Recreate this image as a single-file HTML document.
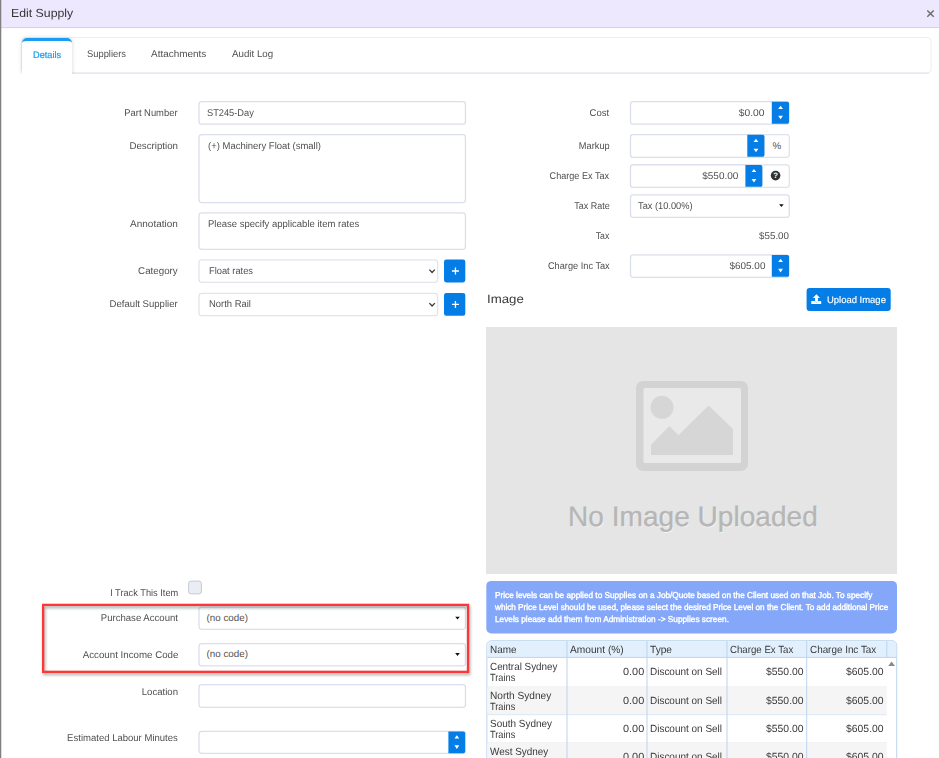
<!DOCTYPE html>
<html><head><meta charset="utf-8"><title>Edit Supply</title>
<style>
*{box-sizing:border-box;margin:0;padding:0}
html,body{width:939px;height:758px;overflow:hidden;background:#fff}
body{position:relative;font-family:"Liberation Sans","DejaVu Sans",sans-serif;font-size:9.8px;color:#505050;line-height:1;text-rendering:geometricPrecision}
.a{position:absolute}
.tl{position:absolute;white-space:nowrap;transform-origin:0 50%}
.tr{position:absolute;white-space:nowrap;transform-origin:100% 50%;text-align:right}
svg{position:absolute;overflow:visible}
#g{left:0;top:0}
</style></head><body>
<svg id="g" width="939" height="758" viewBox="0 0 939 758">
<rect x="0" y="0" width="939" height="27.2" fill="#ede8fd"/>
<rect x="0" y="27.1" width="939" height="1" fill="#d7cafa"/>
<rect x="0" y="0" width="1" height="758" fill="#808080"/>
<rect x="1" y="0" width="0.6" height="758" fill="#808080" opacity=".45"/>
<path d="M927.3 10.4l6.4 6.4M933.7 10.4l-6.4 6.4" stroke="#6c6c6c" stroke-width="1.45" fill="none"/>
<rect x="21.5" y="37.5" width="909.6" height="35.6" rx="4" fill="#fff" stroke="#eceef2" stroke-width="1"/>
<rect x="24" y="72.6" width="905" height="1" fill="#dde2e9"/>
<rect x="199.00" y="101.65" width="266.45" height="22.55" rx="2.8" fill="#fff" stroke="#dbdeec" stroke-width="1.25"/>
<rect x="199.00" y="134.60" width="266.45" height="68.00" rx="2.8" fill="#fff" stroke="#dbdeec" stroke-width="1.25"/>
<rect x="199.00" y="212.80" width="266.45" height="36.60" rx="2.8" fill="#fff" stroke="#dbdeec" stroke-width="1.25"/>
<rect x="199.00" y="259.90" width="238.60" height="22.40" rx="2.8" fill="#fff" stroke="#e2e4ee" stroke-width="1.25"/>
<path d="M429.40 269.60l2.7 2.9l2.7 -2.9" stroke="#3a3a3a" stroke-width="1.3" fill="none"/>
<rect x="444.00" y="259.40" width="21.30" height="23.00" rx="2.3" fill="#047de6"/>
<path d="M455.45 267.50v7M451.95 271.00h7" stroke="#fff" stroke-width="1.3" fill="none"/>
<rect x="199.00" y="293.40" width="238.60" height="22.30" rx="2.8" fill="#fff" stroke="#e2e4ee" stroke-width="1.25"/>
<path d="M429.40 303.10l2.7 2.9l2.7 -2.9" stroke="#3a3a3a" stroke-width="1.3" fill="none"/>
<rect x="444.00" y="292.90" width="21.30" height="22.90" rx="2.3" fill="#047de6"/>
<path d="M455.45 300.95v7M451.95 304.45h7" stroke="#fff" stroke-width="1.3" fill="none"/>
<rect x="188.60" y="581.10" width="12.80" height="12.80" rx="2.6" fill="#eaedf3" stroke="#c3cad6" stroke-width="1.0"/>
<rect x="199.00" y="607.00" width="266.45" height="22.30" rx="2.8" fill="#fff" stroke="#dbdeec" stroke-width="1.25"/>
<path d="M455.20 616.70h4.6l-2.3 2.9Z" fill="#111"/>
<rect x="199.00" y="643.70" width="266.45" height="22.20" rx="2.8" fill="#fff" stroke="#dbdeec" stroke-width="1.25"/>
<path d="M455.20 653.10h4.6l-2.3 2.9Z" fill="#111"/>
<rect x="199.00" y="684.60" width="266.45" height="22.80" rx="2.8" fill="#fff" stroke="#dbdeec" stroke-width="1.25"/>
<rect x="199.00" y="731.30" width="266.45" height="22.10" rx="2.8" fill="#fff" stroke="#dbdeec" stroke-width="1.25"/>
<path d="M448.40 731.40H463.40A1.7 1.7 0 0 1 465.10 733.10V751.55A1.7 1.7 0 0 1 463.40 753.25H448.40Z" fill="#047de6"/>
<path d="M454.45 738.53l2.4 -3.2l2.4 3.2Z M454.45 745.28l2.4 3.7l2.4 -3.7Z" fill="#fff"/>
<rect x="630.50" y="101.65" width="158.20" height="22.55" rx="2.8" fill="#fff" stroke="#dbdeec" stroke-width="1.25"/>
<path d="M771.80 101.75H787.40A1.7 1.7 0 0 1 789.10 103.45V121.95A1.7 1.7 0 0 1 787.40 123.65H771.80Z" fill="#047de6"/>
<path d="M778.15 108.90l2.4 -3.2l2.4 3.2Z M778.15 115.65l2.4 3.7l2.4 -3.7Z" fill="#fff"/>
<rect x="630.50" y="134.60" width="158.80" height="22.70" rx="2.8" fill="#fff" stroke="#dfe2ec" stroke-width="1.25"/>
<rect x="630.50" y="134.60" width="133.50" height="22.70" rx="2.8" fill="#fff" stroke="#dbdeec" stroke-width="1.25"/>
<path d="M747.30 134.70H762.70A1.7 1.7 0 0 1 764.40 136.40V155.05A1.7 1.7 0 0 1 762.70 156.75H747.30Z" fill="#047de6"/>
<path d="M753.55 141.92l2.4 -3.2l2.4 3.2Z M753.55 148.67l2.4 3.7l2.4 -3.7Z" fill="#fff"/>
<rect x="630.50" y="164.90" width="158.80" height="22.50" rx="2.8" fill="#fff" stroke="#dfe2ec" stroke-width="1.25"/>
<rect x="630.50" y="164.90" width="131.50" height="22.50" rx="2.8" fill="#fff" stroke="#dbdeec" stroke-width="1.25"/>
<path d="M745.40 165.00H760.60A1.7 1.7 0 0 1 762.30 166.70V185.15A1.7 1.7 0 0 1 760.60 186.85H745.40Z" fill="#047de6"/>
<path d="M751.55 172.12l2.4 -3.2l2.4 3.2Z M751.55 178.88l2.4 3.7l2.4 -3.7Z" fill="#fff"/>
<circle cx="775.6" cy="175.6" r="4.8" fill="#303030"/>
<rect x="630.50" y="194.80" width="158.80" height="22.50" rx="2.8" fill="#fff" stroke="#dbdeec" stroke-width="1.25"/>
<path d="M779.10 204.20h4.6l-2.3 2.9Z" fill="#111"/>
<rect x="630.50" y="254.80" width="158.20" height="22.60" rx="2.8" fill="#fff" stroke="#dbdeec" stroke-width="1.25"/>
<path d="M771.80 254.90H787.40A1.7 1.7 0 0 1 789.10 256.60V275.15A1.7 1.7 0 0 1 787.40 276.85H771.80Z" fill="#047de6"/>
<path d="M778.15 262.07l2.4 -3.2l2.4 3.2Z M778.15 268.82l2.4 3.7l2.4 -3.7Z" fill="#fff"/>
<rect x="806.6" y="287.9" width="84.1" height="23.1" rx="3" fill="#047de6"/>
<path d="M816.4 294.3L820 297.95H817.9V301.3H815V297.95H812.8Z M811.3 301.1H821.2V303.9H811.3Z" fill="#fff"/>
<path d="M814.3 301.7Q816.4 302.9 818.6 301.7" stroke="#047de6" stroke-width=".55" fill="none" opacity=".55"/>
<rect x="486" y="327" width="411" height="247" fill="#e5e5e5"/>
<rect x="636" y="381" width="112" height="90" rx="7" fill="#d3d3d3"/>
<rect x="643.5" y="388" width="97.5" height="75" rx="1.5" fill="#e9e9e9"/>
<circle cx="662" cy="407.3" r="11.5" fill="#d6d6d6"/>
<path d="M651 455V444.8L669.3 426.1L678.5 435.3L708.6 405.4L733 429V455Z" fill="#d6d6d6"/>
<text x="693.6" y="526.6" text-anchor="middle" font-family="Liberation Sans,sans-serif" font-size="28.1" fill="#f6f6f6">No Image Uploaded</text>
<text x="692.9" y="525.6" text-anchor="middle" font-family="Liberation Sans,sans-serif" font-size="28.1" fill="#b6b6b6" stroke="#b6b6b6" stroke-width=".35">No Image Uploaded</text>
<rect x="486.3" y="580.9" width="410.7" height="52.6" rx="5" fill="#84a7f9"/>
<path d="M486.9 764V645.2A4.5 4.5 0 0 1 491.4 640.7H892.2A4.5 4.5 0 0 1 896.7 645.2V764Z" fill="#fff" stroke="#bcd4ef" stroke-width="1"/>
<path d="M487.4 657V645.2A4 4 0 0 1 491.4 641.2H892.2A4 4 0 0 1 896.2 645.2V657Z" fill="#e2effd"/>
<rect x="487.4" y="656.9" width="408.8" height="1" fill="#bcd4ef"/>
<rect x="487.4" y="686.0" width="399.4" height="1" fill="#dae6f4"/>
<rect x="487.4" y="686.0" width="399.4" height="28.2" fill="#f5f5f5"/>
<rect x="487.4" y="714.2" width="399.4" height="1" fill="#dae6f4"/>
<rect x="487.4" y="742.2" width="399.4" height="1" fill="#dae6f4"/>
<rect x="487.4" y="742.2" width="399.4" height="27.8" fill="#f5f5f5"/>
<rect x="487.4" y="770.0" width="399.4" height="1" fill="#dae6f4"/>
<rect x="566.5" y="641" width="1" height="118" fill="#bcd4ef"/>
<rect x="646.5" y="641" width="1" height="118" fill="#bcd4ef"/>
<rect x="726.5" y="641" width="1" height="118" fill="#bcd4ef"/>
<rect x="806.2" y="641" width="1" height="118" fill="#bcd4ef"/>
<rect x="886.3" y="641" width="1" height="16.5" fill="#bcd4ef"/>
<path d="M888.2 666l3.4 -4.6l3.4 4.6Z" fill="#8a8a8a"/>
</svg>
<div class="tl" style="left:11.2px;top:8px;font-size:11.8px;transform:scaleX(1.0421);color:#333">Edit Supply</div>
<div class="a" style="left:22px;top:38px;width:50px;height:36px;background:#fff;border-top:3px solid #1a9cf2;border-radius:5px 5px 0 0;box-shadow:0 0 4px rgba(0,0,0,.17);clip-path:inset(-6px -6px 0 -6px)"></div>
<div class="tl" style="left:32.7px;top:50px;font-size:9.4px;transform:scaleX(0.9841);color:#1a9cf2;-webkit-text-stroke:0.22px #1a9cf2">Details</div>
<div class="tl" style="left:87.0px;top:50px;font-size:9.8px;transform:scaleX(0.9549);">Suppliers</div>
<div class="tl" style="left:151.3px;top:50px;font-size:9.8px;transform:scaleX(1.0156);">Attachments</div>
<div class="tl" style="left:232.0px;top:50px;font-size:9.8px;transform:scaleX(0.995);">Audit Log</div>
<div class="tr" style="right:761.0px;top:109px;font-size:9.8px;transform:scaleX(0.9595);">Part Number</div>
<div class="tl" style="left:206.5px;top:109px;font-size:9.8px;transform:scaleX(0.9443);">ST245-Day</div>
<div class="tr" style="right:761.0px;top:142px;font-size:9.8px;transform:scaleX(0.9915);">Description</div>
<div class="tl" style="left:207.6px;top:142px;font-size:9.8px;transform:scaleX(0.9676);">(+) Machinery Float (small)</div>
<div class="tr" style="right:761.0px;top:220px;font-size:9.8px;transform:scaleX(1.0201);">Annotation</div>
<div class="tl" style="left:207.6px;top:220px;font-size:9.8px;transform:scaleX(0.9708);">Please specify applicable item rates</div>
<div class="tr" style="right:761.0px;top:267px;font-size:9.8px;transform:scaleX(0.9983);">Category</div>
<div class="tl" style="left:209.0px;top:267px;font-size:9.8px;transform:scaleX(0.9504);">Float rates</div>
<div class="tr" style="right:761.0px;top:300px;font-size:9.8px;transform:scaleX(0.9768);">Default Supplier</div>
<div class="tl" style="left:209.0px;top:300px;font-size:9.8px;transform:scaleX(0.9618);">North Rail</div>
<div class="tr" style="right:761.0px;top:589px;font-size:9.8px;transform:scaleX(0.9428);">I Track This Item</div>
<div class="tr" style="right:761.0px;top:614px;font-size:9.8px;transform:scaleX(0.9776);">Purchase Account</div>
<div class="tl" style="left:206.5px;top:614px;font-size:9.8px;">(no code)</div>
<div class="tr" style="right:761.0px;top:651px;font-size:9.8px;transform:scaleX(0.9928);">Account Income Code</div>
<div class="tl" style="left:206.5px;top:650px;font-size:9.8px;">(no code)</div>
<div class="tr" style="right:761.0px;top:688px;font-size:9.8px;transform:scaleX(0.9798);">Location</div>
<div class="tr" style="right:761.0px;top:734px;font-size:9.8px;transform:scaleX(0.9727);">Estimated Labour Minutes</div>
<div class="tr" style="right:329.7px;top:109px;font-size:9.8px;transform:scaleX(0.9724);">Cost</div>
<div class="tr" style="right:174.0px;top:109px;font-size:9.8px;transform:scaleX(1.0476);">$0.00</div>
<div class="tr" style="right:329.7px;top:142px;font-size:9.8px;transform:scaleX(0.9427);">Markup</div>
<div class="tl" style="left:772.6px;top:142px;font-size:9.8px;">%</div>
<div class="tr" style="right:329.7px;top:172px;font-size:9.8px;transform:scaleX(0.9286);">Charge Ex Tax</div>
<div class="tr" style="right:200.6px;top:172px;font-size:9.8px;transform:scaleX(1.022);">$550.00</div>
<div class="a" style="left:771px;top:171px;width:9.2px;text-align:center;font-size:7.8px;font-weight:bold;color:#fff;line-height:9.4px">?</div>
<div class="tr" style="right:329.7px;top:202px;font-size:9.8px;transform:scaleX(0.9154);">Tax Rate</div>
<div class="tl" style="left:638.0px;top:202px;font-size:9.8px;transform:scaleX(0.9457);">Tax (10.00%)</div>
<div class="tr" style="right:329.7px;top:232px;font-size:9.8px;transform:scaleX(0.8918);">Tax</div>
<div class="tr" style="right:149.8px;top:232px;font-size:9.8px;transform:scaleX(0.9977);">$55.00</div>
<div class="tr" style="right:329.7px;top:262px;font-size:9.8px;transform:scaleX(0.9404);">Charge Inc Tax</div>
<div class="tr" style="right:174.0px;top:262px;font-size:9.8px;transform:scaleX(1.0135);">$605.00</div>
<div class="tl" style="left:486.7px;top:293px;font-size:12px;transform:scaleX(1.1031);color:#3a3a3a">Image</div>
<div class="tl" style="left:826.6px;top:296px;font-size:9.5px;transform:scaleX(0.9957);color:#fff;-webkit-text-stroke:.15px #fff">Upload Image</div>
<div class="tl" style="left:494.5px;top:591px;font-size:8.6px;transform:scaleX(0.9593);color:#fff;-webkit-text-stroke:.38px #fff">Price levels can be applied to Supplies on a Job/Quote based on the Client used on that Job. To specify</div>
<div class="tl" style="left:494.5px;top:603px;font-size:8.6px;transform:scaleX(0.9486);color:#fff;-webkit-text-stroke:.38px #fff">which Price Level should be used, please select the desired Price Level on the Client. To add additional Price</div>
<div class="tl" style="left:494.5px;top:615px;font-size:8.6px;transform:scaleX(0.9633);color:#fff;-webkit-text-stroke:.38px #fff">Levels please add them from Administration -&gt; Supplies screen.</div>
<div class="tl" style="left:490.2px;top:646px;font-size:10.4px;transform:scaleX(0.956);color:#3a3a3a">Name</div>
<div class="tl" style="left:570.0px;top:646px;font-size:10.4px;transform:scaleX(0.9798);color:#3a3a3a">Amount (%)</div>
<div class="tl" style="left:650.0px;top:646px;font-size:10.4px;transform:scaleX(0.9764);color:#3a3a3a">Type</div>
<div class="tl" style="left:730.0px;top:646px;font-size:10.4px;transform:scaleX(0.9306);color:#3a3a3a">Charge Ex Tax</div>
<div class="tl" style="left:810.0px;top:646px;font-size:10.4px;transform:scaleX(0.9505);color:#3a3a3a">Charge Inc Tax</div>
<div class="tl" style="left:490.2px;top:663px;font-size:10.4px;transform:scaleX(0.9501);color:#3a3a3a">Central Sydney</div>
<div class="tl" style="left:490.2px;top:674px;font-size:10.4px;transform:scaleX(0.8865);color:#3a3a3a">Trains</div>
<div class="tr" style="right:295.0px;top:668px;font-size:10.4px;transform:scaleX(1.0502);color:#3a3a3a">0.00</div>
<div class="tl" style="left:650.2px;top:668px;font-size:10.4px;transform:scaleX(0.9588);color:#3a3a3a">Discount on Sell</div>
<div class="tr" style="right:135.5px;top:668px;font-size:10.4px;transform:scaleX(0.9983);color:#3a3a3a">$550.00</div>
<div class="tr" style="right:55.5px;top:668px;font-size:10.4px;transform:scaleX(0.9983);color:#3a3a3a">$605.00</div>
<div class="tl" style="left:490.2px;top:692px;font-size:10.4px;transform:scaleX(0.9729);color:#3a3a3a">North Sydney</div>
<div class="tl" style="left:490.2px;top:703px;font-size:10.4px;transform:scaleX(0.8865);color:#3a3a3a">Trains</div>
<div class="tr" style="right:295.0px;top:697px;font-size:10.4px;transform:scaleX(1.0502);color:#3a3a3a">0.00</div>
<div class="tl" style="left:650.2px;top:697px;font-size:10.4px;transform:scaleX(0.9588);color:#3a3a3a">Discount on Sell</div>
<div class="tr" style="right:135.5px;top:697px;font-size:10.4px;transform:scaleX(0.9983);color:#3a3a3a">$550.00</div>
<div class="tr" style="right:55.5px;top:697px;font-size:10.4px;transform:scaleX(0.9983);color:#3a3a3a">$605.00</div>
<div class="tl" style="left:490.2px;top:720px;font-size:10.4px;transform:scaleX(0.9582);color:#3a3a3a">South Sydney</div>
<div class="tl" style="left:490.2px;top:731px;font-size:10.4px;transform:scaleX(0.8865);color:#3a3a3a">Trains</div>
<div class="tr" style="right:295.0px;top:725px;font-size:10.4px;transform:scaleX(1.0502);color:#3a3a3a">0.00</div>
<div class="tl" style="left:650.2px;top:725px;font-size:10.4px;transform:scaleX(0.9588);color:#3a3a3a">Discount on Sell</div>
<div class="tr" style="right:135.5px;top:725px;font-size:10.4px;transform:scaleX(0.9983);color:#3a3a3a">$550.00</div>
<div class="tr" style="right:55.5px;top:725px;font-size:10.4px;transform:scaleX(0.9983);color:#3a3a3a">$605.00</div>
<div class="tl" style="left:490.2px;top:748px;font-size:10.4px;transform:scaleX(0.9544);color:#3a3a3a">West Sydney</div>
<div class="tl" style="left:490.2px;top:759px;font-size:10.4px;transform:scaleX(0.8865);color:#3a3a3a">Trains</div>
<div class="tr" style="right:295.0px;top:753px;font-size:10.4px;transform:scaleX(1.0502);color:#3a3a3a">0.00</div>
<div class="tl" style="left:650.2px;top:753px;font-size:10.4px;transform:scaleX(0.9588);color:#3a3a3a">Discount on Sell</div>
<div class="tr" style="right:135.5px;top:753px;font-size:10.4px;transform:scaleX(0.9983);color:#3a3a3a">$550.00</div>
<div class="tr" style="right:55.5px;top:753px;font-size:10.4px;transform:scaleX(0.9983);color:#3a3a3a">$605.00</div>
<svg style="left:0;top:0;filter:drop-shadow(1px 2.2px 1.6px rgba(20,40,40,.42))" width="939" height="758" viewBox="0 0 939 758"><rect x="43.15" y="604.9" width="424.9" height="66.95" fill="none" stroke="#ff3636" stroke-width="2.3"/></svg>
</body></html>
